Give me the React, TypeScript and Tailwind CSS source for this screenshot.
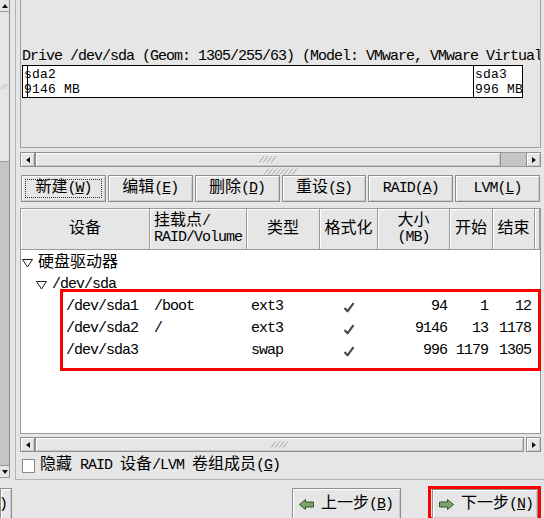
import React from "react";

const font = "font-['Liberation_Mono','Noto_Sans_CJK_SC',monospace]";
const bevel =
  "border border-[#8e8e8e] bg-[#e6e6e6] shadow-[inset_1px_1px_0_#ffffff,inset_-1px_-1px_0_#cacaca]";

const cols = [129, 97, 73, 58, 72, 43, 42, 5];

const parts = [
  { dev: "/dev/sda1", mount: "/boot", type: "ext3", size: "94", start: "1", end: "12" },
  { dev: "/dev/sda2", mount: "/", type: "ext3", size: "9146", start: "13", end: "1178" },
  { dev: "/dev/sda3", mount: "", type: "swap", size: "996", start: "1179", end: "1305" },
];

function Zh({ children }: { children: React.ReactNode }) {
  return <span className="text-[16px] tracking-normal">{children}</span>;
}

function Tri({ dir }: { dir: "up" | "down" | "left" | "right" }) {
  const pts = {
    up: "0,5 3,1 6,5",
    down: "0,1 3,5 6,1",
    left: "5,0 1,3 5,6",
    right: "1,0 5,3 1,6",
  }[dir];
  return (
    <svg width="6" height="6" viewBox="0 0 6 6">
      <polygon points={pts} fill="#111" />
    </svg>
  );
}

function Grip({ n = 4 }: { n?: number }) {
  return (
    <svg width={n * 4 + 4} height="7" viewBox={`0 0 ${n * 4 + 4} 7`}>
      {Array.from({ length: n }).map((_, i) => (
        <line key={i} x1={i * 4 + 1} y1="6.5" x2={i * 4 + 6} y2="0.5" stroke="#a6a6a6" strokeWidth="1" />
      ))}
    </svg>
  );
}

function HScroll({ trough = 0, gap = 0 }: { trough?: number; gap?: number }) {
  return (
    <div className="flex h-[15px]">
      <div className={`${bevel} w-[15px] flex items-center justify-center`}>
        <Tri dir="left" />
      </div>
      <div className={`${bevel} flex-1 flex items-center justify-center`}>
        <Grip />
      </div>
      {trough > 0 ? <div className="bg-[#c6c6c6] border-y border-[#9a9a9a]" style={{ width: trough }} /> : null}
      {gap > 0 ? <div style={{ width: gap }} /> : null}
      <div className={`${bevel} w-[15px] flex items-center justify-center`}>
        <Tri dir="right" />
      </div>
    </div>
  );
}

function Check() {
  return (
    <svg width="12" height="11" viewBox="0 0 12 11">
      <path d="M1.5 6 L4.5 9.3 L10.5 1.2" fill="none" stroke="#4a4a4a" strokeWidth="2.2" strokeLinejoin="round" />
    </svg>
  );
}

function Expander() {
  return (
    <svg width="11" height="9" viewBox="0 0 11 9">
      <polygon points="0.5,0.5 10.5,0.5 5.5,8" fill="none" stroke="#222" strokeWidth="1" />
    </svg>
  );
}

function GoArrow({ dir }: { dir: "left" | "right" }) {
  const pts =
    dir === "left"
      ? "0.5,5.5 6.5,0.5 6.5,3 14.5,3 14.5,8 6.5,8 6.5,10.5"
      : "14.5,5.5 8.5,0.5 8.5,3 0.5,3 0.5,8 8.5,8 8.5,10.5";
  return (
    <svg width="15" height="11" viewBox="0 0 15 11">
      <polygon points={pts} fill="#7aa56a" stroke="#35522e" strokeWidth="1" strokeLinejoin="round" />
    </svg>
  );
}

function LeftScroll() {
  return (
    <div className="w-[10px] h-[478px] border-r border-[#8c8c8c] flex flex-col">
      <div className="h-[12px] border-b border-[#9a9a9a] flex items-center justify-center">
        <Tri dir="up" />
      </div>
      <div className="h-[150px] border-b border-[#9a9a9a] flex items-center justify-center overflow-hidden">
        <Grip n={2} />
      </div>
      <div className="flex-1 bg-[#c6c6c6]" />
      <div className="h-[13px] border-y border-[#9a9a9a] flex items-center justify-center">
        <Tri dir="down" />
      </div>
    </div>
  );
}

export default function App() {
  const tools = [
    ["新建", "W"],
    ["编辑", "E"],
    ["删除", "D"],
    ["重设", "S"],
    ["RAID", "A"],
    ["LVM", "L"],
  ];

  return (
    <div
      className={`w-[544px] h-[518px] overflow-hidden bg-[#e6e6e6] text-black ${font} text-[15px] leading-[16px] tracking-[-1px] flex flex-col`}
    >
      <div className="flex h-[480px]">
        <LeftScroll />
        <div className="w-[6px] border-r border-[#b3b3b3]" />
        <main className="flex-1 min-w-0 pl-[4px] pr-[3px] border-b border-[#b3b3b3] flex flex-col">
          {/* drive graph */}
          <div className="h-[148px] border-x border-b border-[#a3a3a3] overflow-hidden">
            <div className="pt-[49px] pl-[1px] whitespace-nowrap">
              Drive /dev/sda (Geom: 1305/255/63) (Model: VMware, VMware Virtual
            </div>
            <div className="relative ml-[1px] w-[501px] h-[33px] border border-black bg-white flex text-[13px] leading-[15px] tracking-[0.2px]">
              <div className="absolute left-[4px] top-0 bottom-0 border-l border-black" />
              <div className="flex-1 pt-[1px] pl-[1px]">
                <div>sda2</div>
                <div>9146 MB</div>
              </div>
              <div className="w-[49px] border-l border-black pt-[1px] pl-[1px] whitespace-nowrap overflow-hidden">
                <div>sda3</div>
                <div>996 MB</div>
              </div>
            </div>
          </div>
          <div className="mt-[4px]">
            <HScroll trough={25} />
          </div>
          <div className="h-[8px] flex items-center justify-center">
            <Grip n={8} />
          </div>

          {/* toolbar */}
          <div className="grid grid-cols-6 gap-[2px] h-[27px] ml-[1px] mr-[1px]">
            {tools.map(([label, key], i) => (
              <div key={label} className={`${bevel} relative flex items-center justify-center whitespace-nowrap`}>
                {i === 0 ? <div className="absolute inset-[3px] border border-dotted border-[#333]" /> : null}
                <span>
                  {/[A-Z]/.test(label) ? label : <Zh>{label}</Zh>}(<u>{key}</u>)
                </span>
              </div>
            ))}
          </div>

          {/* partition tree */}
          <div className="mt-[6px] h-[226px] border border-[#9a9a9a] flex flex-col">
            <div className="flex h-[41px] shrink-0">
              {[
                <div key="a" className="w-full text-center"><Zh>设备</Zh></div>,
                <div key="b" className="w-full pl-[4px]">
                  <div className="leading-[16px]"><Zh>挂载点</Zh>/</div>
                  <div className="leading-[15px]">RAID/Volume</div>
                </div>,
                <div key="c" className="w-full text-center"><Zh>类型</Zh></div>,
                <div key="d" className="w-full text-center"><Zh>格式化</Zh></div>,
                <div key="e" className="w-full text-center">
                  <div className="leading-[16px]"><Zh>大小</Zh></div>
                  <div className="leading-[15px]">(MB)</div>
                </div>,
                <div key="f" className="w-full text-center"><Zh>开始</Zh></div>,
                <div key="g" className="w-full text-center"><Zh>结束</Zh></div>,
                <div key="h" />,
              ].map((cell, i) => (
                <div
                  key={i}
                  style={{ width: cols[i] }}
                  className="shrink-0 flex items-center border-r border-b border-[#9a9a9a] bg-[#e6e6e6] shadow-[inset_1px_1px_0_#ffffff] whitespace-nowrap overflow-hidden"
                >
                  {cell}
                </div>
              ))}
            </div>
            <div className="relative flex-1 bg-white pt-[2px] whitespace-nowrap">
              <div className="h-[22px] flex items-center pl-[1px]">
                <Expander />
                <span className="ml-[5px]"><Zh>硬盘驱动器</Zh></span>
              </div>
              <div className="h-[22px] flex items-center pl-[15px]">
                <Expander />
                <span className="ml-[5px]">/dev/sda</span>
              </div>
              {parts.map((p) => (
                <div key={p.dev} className="h-[22px] flex items-center">
                  <div style={{ width: cols[0] }} className="shrink-0 pl-[45px]">{p.dev}</div>
                  <div style={{ width: cols[1] }} className="shrink-0 pl-[4px]">{p.mount}</div>
                  <div style={{ width: cols[2] }} className="shrink-0 pl-[4px]">{p.type}</div>
                  <div style={{ width: cols[3] }} className="shrink-0 flex justify-center"><Check /></div>
                  <div style={{ width: cols[4] }} className="shrink-0 text-right pr-[3px]">{p.size}</div>
                  <div style={{ width: cols[5] }} className="shrink-0 text-right pr-[5px]">{p.start}</div>
                  <div style={{ width: cols[6] }} className="shrink-0 text-right pr-[4px]">{p.end}</div>
                </div>
              ))}
              <div className="pointer-events-none absolute left-[39px] top-[39px] w-[481px] h-[82px] border-[3px] border-[#ff0000]" />
            </div>
          </div>
          <div className="mt-[3px]">
            <HScroll gap={2} />
          </div>
          <div className="flex-1 flex items-center pl-[2px] whitespace-nowrap">
            <div className="w-[13px] h-[14px] bg-white border border-[#8a8a8a] mr-[5px]" />
            <span className="whitespace-pre">
              <Zh>隐藏</Zh> RAID <Zh>设备</Zh>/LVM <Zh>卷组成员</Zh>(<u>G</u>)
            </span>
          </div>
        </main>
      </div>

      {/* wizard buttons */}
      <div className="flex items-start pt-[8px] h-[38px]">
        <div className={`${bevel} w-[12px] h-[32px] flex items-center justify-end pr-[4px] overflow-hidden whitespace-nowrap`}>
          <span>
            <Zh>帮助</Zh>(H)
          </span>
        </div>
        <div className={`${bevel} ml-[280px] w-[109px] h-[32px] flex items-center pl-[6px] whitespace-nowrap`}>
          <GoArrow dir="left" />
          <span className="ml-[7px]"><Zh>上一步</Zh>(<u>B</u>)</span>
        </div>
        <div className="ml-[27px] -mt-[2px] w-[113px] h-[34px] border-[3px] border-[#ff0000] pl-[1px]">
          <div className={`${bevel} w-[106px] h-[30px] flex items-center pl-[6px] whitespace-nowrap`}>
            <GoArrow dir="right" />
            <span className="ml-[7px]"><Zh>下一步</Zh>(<u>N</u>)</span>
          </div>
        </div>
      </div>
    </div>
  );
}
